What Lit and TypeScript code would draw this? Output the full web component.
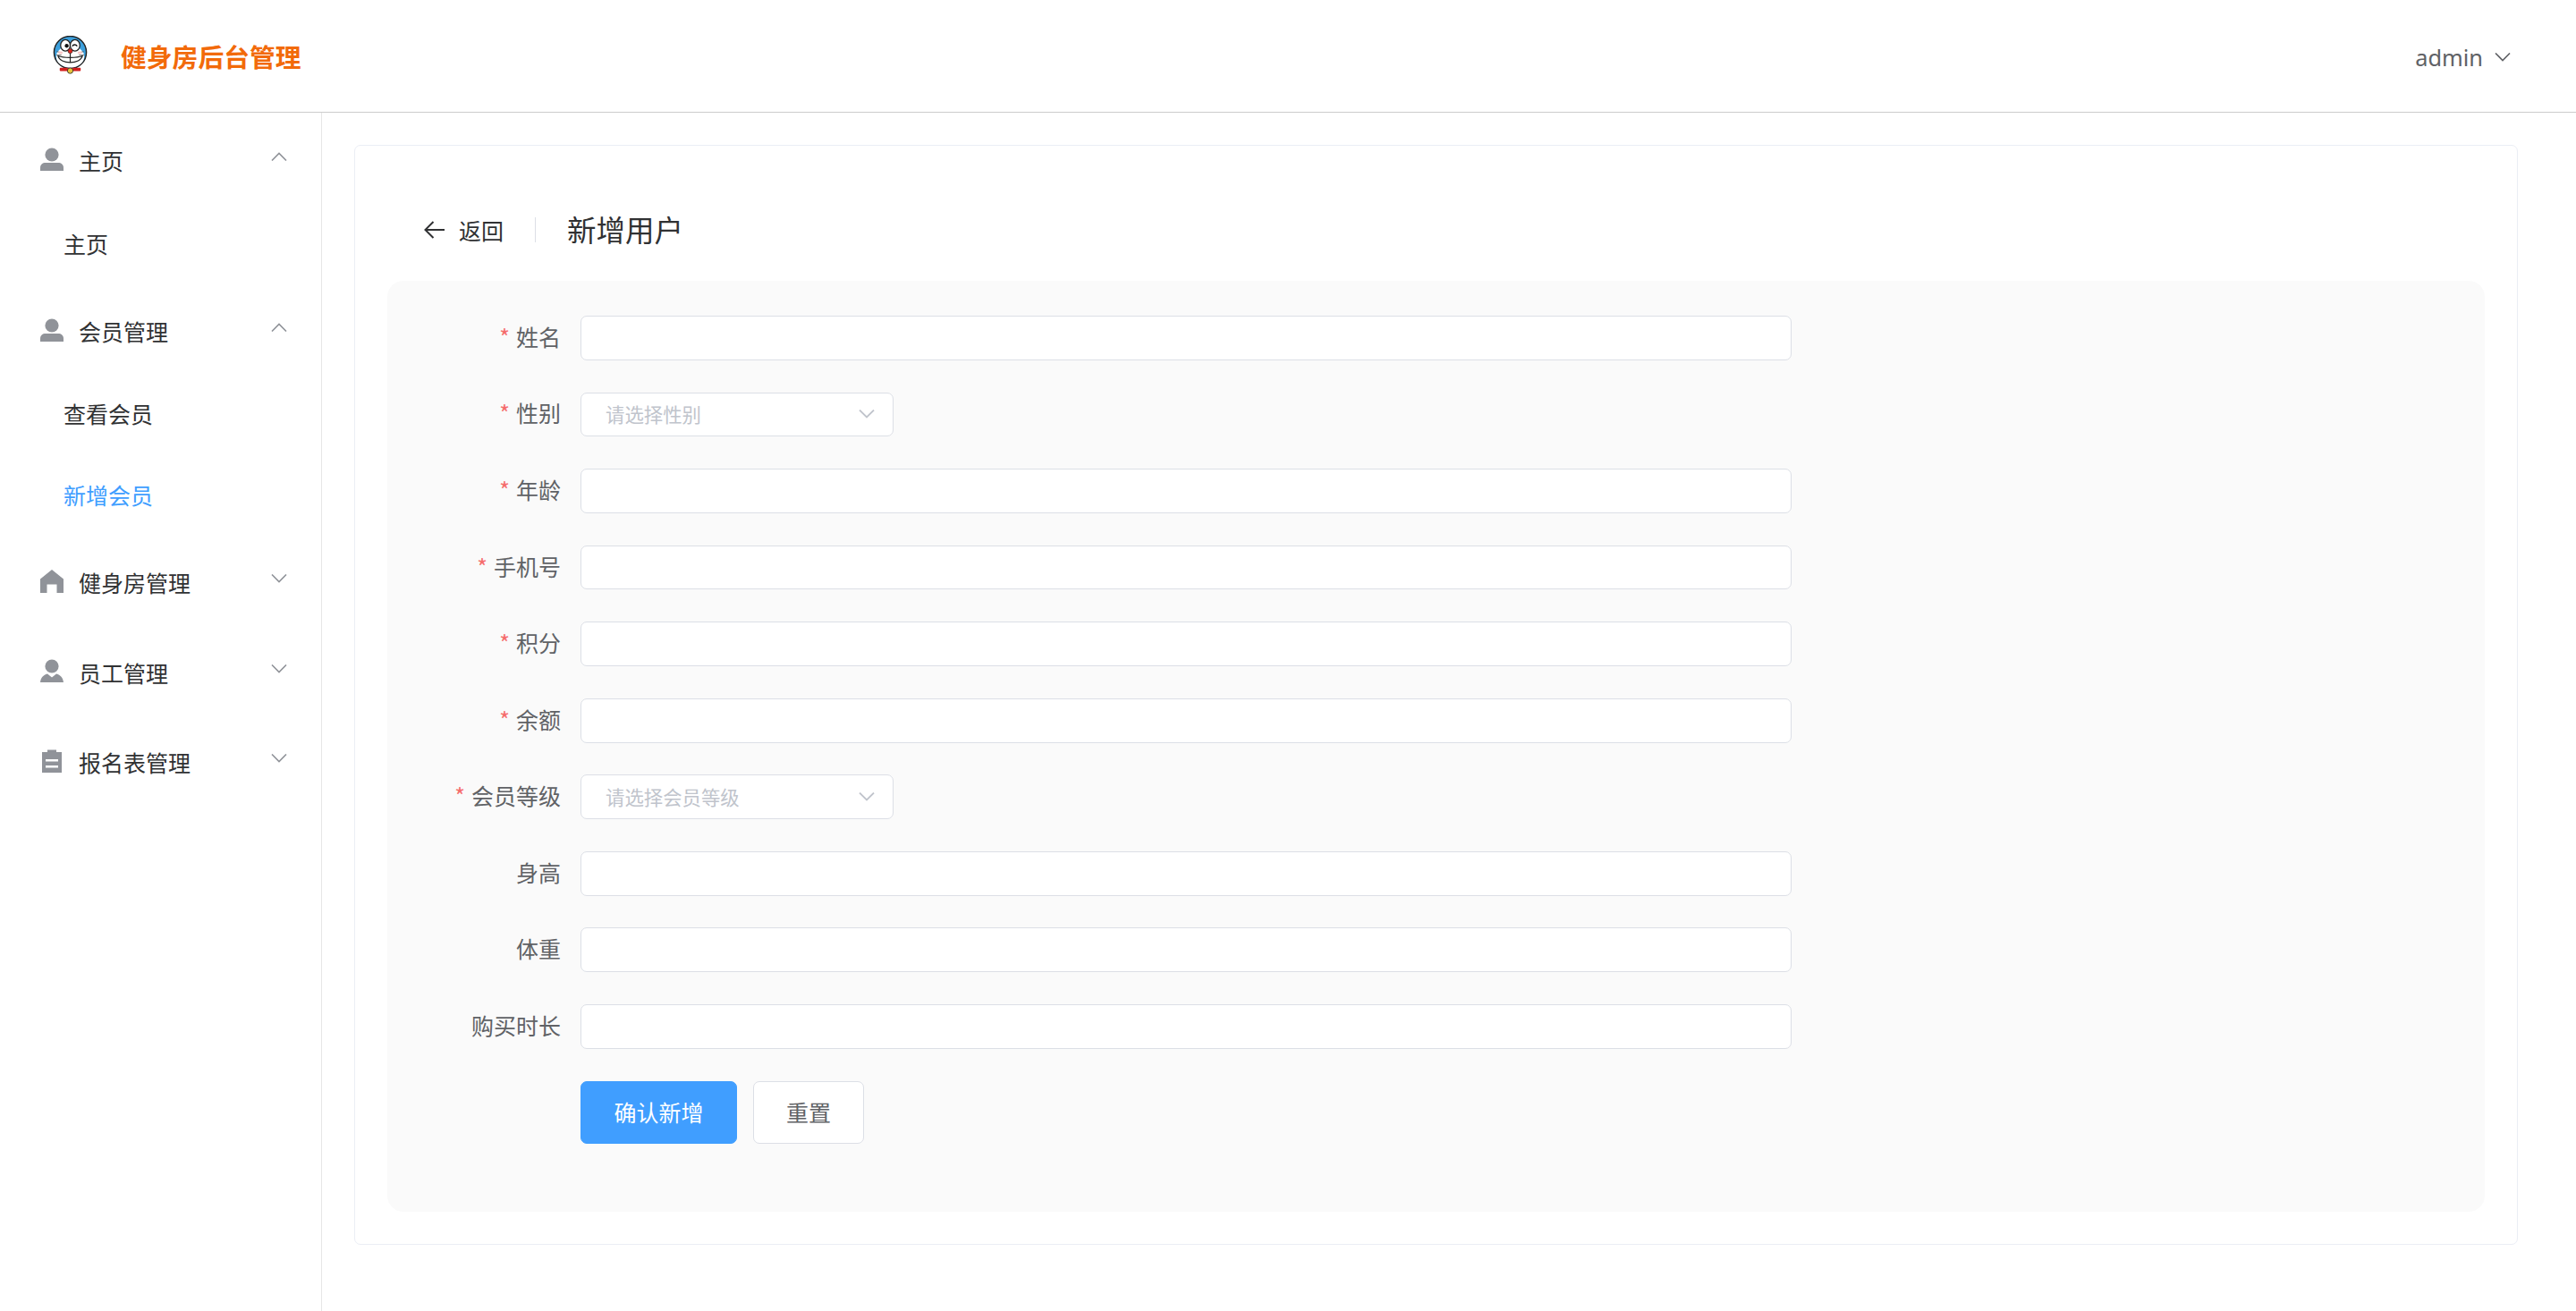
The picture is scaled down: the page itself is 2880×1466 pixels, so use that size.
import { LitElement, css, html, svg } from 'lit';
import { customElement } from 'lit/decorators.js';
import { classMap } from 'lit/directives/class-map.js';

type IconName = 'user' | 'home' | 'custom' | 'order';

interface MenuGroup {
    icon: IconName;
    title: string;
    open: boolean;
    items: { label: string; active?: boolean }[];
}

const MENU: MenuGroup[] = [
    { icon: 'user', title: '主页', open: true, items: [{ label: '主页' }] },
    {
        icon: 'user',
        title: '会员管理',
        open: true,
        items: [{ label: '查看会员' }, { label: '新增会员', active: true }],
    },
    { icon: 'home', title: '健身房管理', open: false, items: [] },
    { icon: 'custom', title: '员工管理', open: false, items: [] },
    { icon: 'order', title: '报名表管理', open: false, items: [] },
];

const FIELDS = [
    { label: '姓名', required: true },
    { label: '性别', required: true, placeholder: '请选择性别' },
    { label: '年龄', required: true },
    { label: '手机号', required: true },
    { label: '积分', required: true },
    { label: '余额', required: true },
    { label: '会员等级', required: true, placeholder: '请选择会员等级' },
    { label: '身高' },
    { label: '体重' },
    { label: '购买时长' },
];

// faint page watermark, one row every 130px
const WATERMARK_ROWS = [-176, -144, -144, -144, -144, -144, -144, -144, -144, -144, -144, -144];

const ICONS: Record<IconName, unknown> = {
    user: svg`<circle cx="13" cy="8" r="7.6"/><path d="M0 26v-3.5C0 19 2.6 17 6 17h14c3.400 0 6 2 6 5.500V26z"/>`,
    home: svg`<path d="M13 0 26 10.500V26h-7.500v-9.500h-11V26H0V10.500z"/>`,
    custom: svg`<circle cx="13" cy="8" r="7.600"/><path d="M0 26c.5-5 3.500-8.500 8-9.500l5 4 5-4c4.500 1 7.500 4.500 8 9.500z"/>`,
    order: svg`<path fill-rule="evenodd" d="M2 3h6V.5h10V3h6v23H2zM6 11v2.500h14V11zM6 18v2.500h14V18z"/>`,
};

@customElement('app-root')
export class AppRoot extends LitElement {
    private chevron(up: boolean) {
        return html`<svg class="chevron" viewBox="0 0 18 10">
            <path d=${up ? 'M1 9.500 9 1.500l8 8' : 'M1 .5l8 8 8-8'} />
        </svg>`;
    }

    private logo() {
        return html`<svg class="logo" viewBox="0 0 44 44">
            <circle cx="22" cy="19" r="18.500" fill="#3c9fdc" stroke="#222" stroke-width="1.500" />
            <ellipse cx="22" cy="24" rx="16" ry="12.500" fill="#fff" />
            <ellipse cx="16.500" cy="11" rx="5.500" ry="6.500" fill="#fff" stroke="#222" stroke-width="1.300" />
            <ellipse cx="27.500" cy="11" rx="5.500" ry="6.500" fill="#fff" stroke="#222" stroke-width="1.300" />
            <circle cx="18" cy="11.500" r="2.200" fill="#111" />
            <path d="M24.500 12c1-2.500 4-2.500 5.500 0" fill="none" stroke="#111" stroke-width="1.500" />
            <circle cx="22" cy="17.500" r="2.600" fill="#e0231c" stroke="#222" stroke-width=".6" />
            <path d="M22 20v11M8 23c2 10 26 10 28 0-6 2.500-22 2.500-28 0z" fill="#fff" stroke="#222" stroke-width="1.200" />
            <path d="M6.500 18l6 1.500M6 22h6M31.500 19.500l6-1.500M32 22h6" stroke="#555" stroke-width=".8" />
            <ellipse cx="11" cy="19.500" rx="2.600" ry="1.500" fill="#f9c8c8" />
            <ellipse cx="33" cy="19.500" rx="2.600" ry="1.500" fill="#f9c8c8" />
            <rect x="10" y="36.500" width="24" height="4" rx="1" fill="#d3201f" />
            <circle cx="22" cy="40" r="3.200" fill="#e6c53c" stroke="#222" stroke-width=".8" />
        </svg>`;
    }

    private renderGroup(group: MenuGroup) {
        return html`
            <div class="menu-title">
                <svg class="menu-icon" viewBox="0 0 26 26">${ICONS[group.icon]}</svg>
                <span class="menu-label">${group.title}</span>
                ${this.chevron(group.open)}
            </div>
            ${group.items.map(
                (item) => html`<div class=${classMap({ 'menu-item': true, active: !!item.active })}>${item.label}</div>`,
            )}
        `;
    }

    private renderField(field: (typeof FIELDS)[number]) {
        return html`
            <div class="form-row">
                <label class="form-label">
                    ${field.required ? html`<span class="star">*</span>` : ''}${field.label}
                </label>
                ${field.placeholder
                    ? html`<div class="select">
                          <span class="placeholder">${field.placeholder}</span>
                          ${this.chevron(false)}
                      </div>`
                    : html`<input class="input" type="text" />`}
            </div>
        `;
    }

    render() {
        return html`
            <header class="topbar">
                <div class="brand">
                    ${this.logo()}
                    <span class="brand-name">健身房后台管理</span>
                </div>
                <div class="account">admin ${this.chevron(false)}</div>
            </header>
            <div class="layout">
                <aside class="sidebar">${MENU.map((group) => this.renderGroup(group))}</aside>
                <main class="main">
                    <section class="card">
                        <div class="page-header">
                            <svg class="back-arrow" viewBox="0 0 24 20">
                                <path d="M23 10H2M10.500 1 1.500 10l9 9" />
                            </svg>
                            <span class="back">返回</span>
                            <span class="divider"></span>
                            <span class="page-title">新增用户</span>
                        </div>
                        <div class="panel">
                            ${FIELDS.map((field) => this.renderField(field))}
                            <div class="actions">
                                <button class="btn primary">确认新增</button>
                                <button class="btn">重置</button>
                            </div>
                        </div>
                    </section>
                </main>
            </div>
            <div class="watermark">
                ${WATERMARK_ROWS.map(
                    (left) => html`<div class="wm-row" style="margin-left: ${left}px">${'jiangwenwwh-'.repeat(13)}</div>`,
                )}
            </div>
        `;
    }

    static override styles = css`
        :host {
            display: block;
            position: relative;
            min-height: 100vh;
            overflow: hidden;
            background: #fff;
            font-family: 'Noto Sans CJK SC', 'Noto Sans', sans-serif;
            font-size: 25px;
            color: #303133;
        }

        .topbar {
            display: flex;
            align-items: center;
            justify-content: space-between;
            box-sizing: border-box;
            height: 126px;
            padding: 0 72px 0 57px;
            border-bottom: 1px solid #cccccc;
        }

        .brand {
            display: flex;
            align-items: center;
            gap: 35px;
        }

        .logo {
            width: 43px;
            height: 43px;
            margin-top: -2px;
        }

        .brand-name {
            font-size: 28.800px;
            font-weight: 700;
            line-height: 40px;
            color: #f26a0a;
        }

        .account {
            display: flex;
            align-items: center;
            gap: 12px;
            padding-top: 2px;
            font-family: 'Noto Sans', sans-serif;
            font-size: 25.400px;
            line-height: 36px;
            color: #606266;
        }

        .account .chevron {
            width: 20px;
        }

        .account .chevron path {
            stroke: #606266;
        }

        .chevron {
            display: block;
            width: 18px;
            height: 10px;
            flex: none;
        }

        .chevron path {
            fill: none;
            stroke: #909399;
            stroke-width: 1.600;
        }

        .layout {
            display: flex;
            min-height: 1340px;
        }

        .sidebar {
            box-sizing: border-box;
            flex: none;
            width: 360px;
            padding-top: 3px;
            border-right: 1px solid #e6e6e6;
        }

        .menu-title {
            display: flex;
            align-items: center;
            height: 100.500px;
            padding: 0 38px 0 45px;
        }

        .menu-icon {
            width: 26px;
            height: 26px;
            flex: none;
            margin-top: -3px;
            fill: #909399;
        }

        .menu-label {
            flex: 1;
            margin-left: 17px;
            line-height: 36px;
        }

        .menu-title .chevron {
            margin-top: -8px;
        }

        .menu-item {
            height: 90.400px;
            padding-left: 71px;
            line-height: 85px;
        }

        .menu-item.active {
            color: #409eff;
        }

        .main {
            flex: 1;
            min-width: 0;
            padding: 36px 65px 0 36px;
        }

        .card {
            box-sizing: border-box;
            padding: 36px 36px 36px;
            border: 1px solid #ebeef5;
            border-radius: 7px;
            background: #fff;
        }

        .page-header {
            display: flex;
            align-items: center;
            height: 115px;
            padding-left: 41px;
        }

        .back-arrow {
            width: 24px;
            height: 20px;
            flex: none;
        }

        .back-arrow path {
            fill: none;
            stroke: #303133;
            stroke-width: 2;
        }

        .back {
            margin-left: 15px;
            line-height: 36px;
        }

        .divider {
            width: 1px;
            height: 28px;
            margin: 0 35px;
            background: #dcdfe6;
        }

        .page-title {
            margin-top: -2px;
            font-size: 32.500px;
            line-height: 44px;
        }

        .panel {
            padding: 39px 0 76px;
            border-radius: 18px;
            background: #fafafa;
        }

        .form-row {
            display: flex;
            align-items: center;
            height: 49.800px;
            margin-bottom: 35.760px;
        }

        .form-label {
            box-sizing: border-box;
            flex: none;
            width: 216px;
            padding-right: 22px;
            margin-top: -4px;
            text-align: right;
            line-height: 36px;
            color: #606266;
        }

        .star {
            margin-right: 7px;
            color: #f56c6c;
        }

        .input,
        .select {
            box-sizing: border-box;
            height: 100%;
            margin: 0;
            border: 1px solid #dcdfe6;
            border-radius: 7px;
            background: #fff;
        }

        .input {
            display: block;
            width: 1354px;
            padding: 0 26px;
            outline: none;
        }

        .select {
            display: flex;
            align-items: center;
            justify-content: space-between;
            width: 350px;
            padding: 0 20px 0 27px;
            font-size: 21.400px;
            color: #c0c4cc;
        }

        .placeholder {
            margin-top: -2px;
        }

        .select .chevron path {
            stroke: #c0c4cc;
            stroke-width: 1.800;
        }

        .actions {
            display: flex;
            gap: 18px;
            padding-left: 216px;
            margin-top: 36px;
        }

        .btn {
            box-sizing: border-box;
            width: 124px;
            height: 70px;
            padding: 0 0 2px;
            border: 1px solid #dcdfe6;
            border-radius: 7px;
            background: #fff;
            font: inherit;
            color: #606266;
        }

        .btn.primary {
            width: 175px;
            border-color: #409eff;
            background: #409eff;
            color: #fff;
        }

        .watermark {
            position: absolute;
            inset: 0;
            overflow: hidden;
            pointer-events: none;
        }

        .wm-row {
            height: 130px;
            margin-top: 0;
            font-family: 'Liberation Sans', sans-serif;
            font-size: 44.500px;
            line-height: 40px;
            padding-top: 90px;
            margin-bottom: -90px;
            white-space: nowrap;
            color: rgba(0, 0, 0, 0.012);
        }
    `;
}

declare global {
    interface HTMLElementTagNameMap {
        'app-root': AppRoot;
    }
}
